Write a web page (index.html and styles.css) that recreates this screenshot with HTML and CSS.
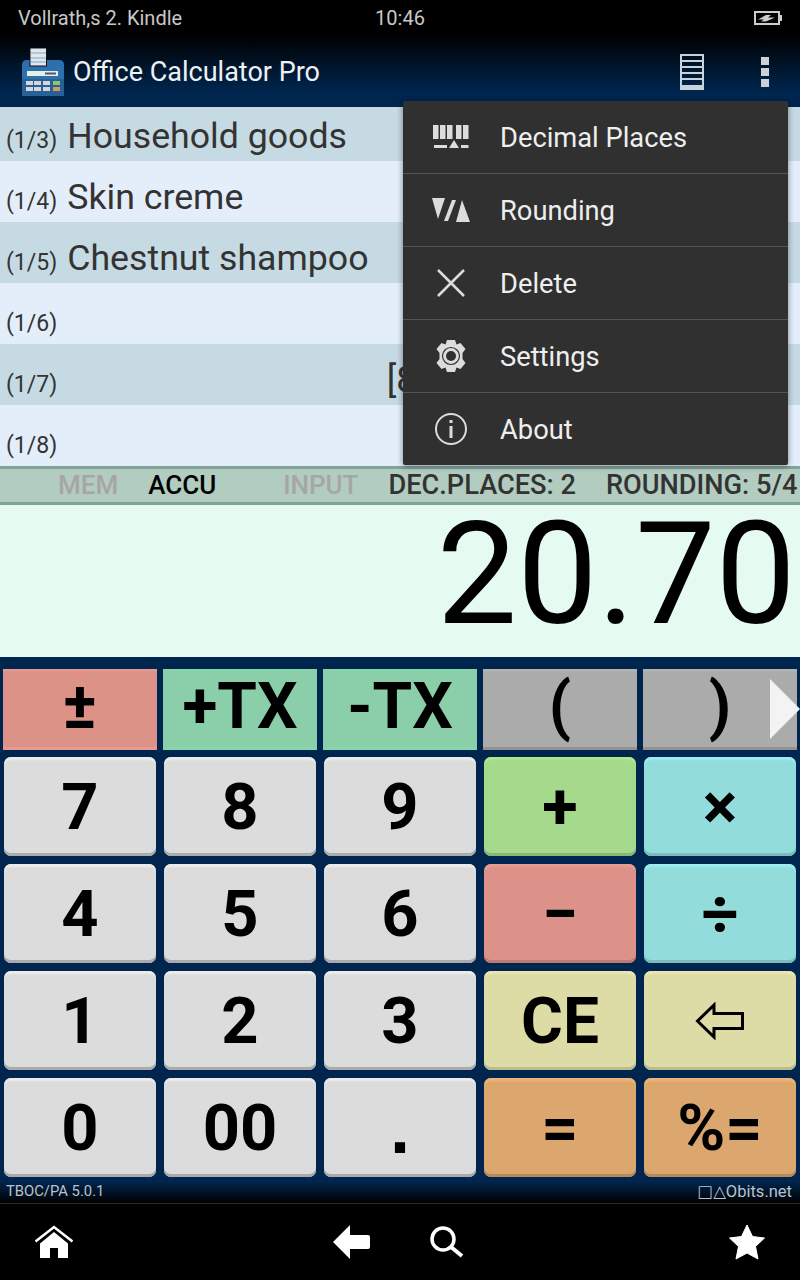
FILE: index.html
```html
<!DOCTYPE html>
<html lang="en">
  <head>
    <meta charset="utf-8" />
    <meta name="viewport" content="width=device-width, initial-scale=1" />
    <link rel="stylesheet" href="styles.css">
    <title>Office Calculator Pro</title>
  </head>
  <body>
    <main class="screen">
      <header class="top">
        <div class="status-bar">
          <span class="status-name">Vollrath,s 2. Kindle</span>
          <span class="status-clock">10:46</span>
          <svg class="status-battery" viewBox="0 0 28 14" width="28" height="14">
            <path d="M1 1h24v12H1z" fill="none" stroke="#ccc" stroke-width="2" />
            <rect x="26" y="4" width="2" height="6" fill="#ccc" />
            <path d="M4 8.500 12 4h5l-3 2.500h7L12 10.500H7l3-2z" fill="#ccc" />
          </svg>
        </div>
        <div class="action-bar">
          <svg class="app-logo" viewBox="0 0 42 48" width="42" height="48">
            <path d="M0 17q0-5 5-5h32q5 0 5 5v31H0z" fill="#2f6fae" />
            <rect x="0" y="31" width="42" height="17" fill="#28609a" />
            <rect x="8" y="0" width="16.500" height="18" fill="#dfe8ee" stroke="#10131a" />
            <path d="M9 5h15M9 10h15M9 14h15" stroke="#b4c6d6" stroke-width="2" />
            <rect x="5" y="23" width="31" height="5" fill="#dff2ea" />
            <rect x="23" y="24.500" width="11" height="2" fill="#556" />
            <g fill="#d6d6d6">
              <rect x="4" y="33" width="7" height="4" />
              <rect x="12" y="33" width="7" height="4" />
              <rect x="21" y="33" width="7" height="4" />
              <rect x="4" y="39" width="7" height="4" />
              <rect x="12" y="39" width="7" height="4" />
              <rect x="21" y="39" width="7" height="4" />
            </g>
            <rect x="31" y="33" width="7" height="4" fill="#8cc56c" />
            <rect x="31" y="39" width="7" height="4" fill="#d89a54" />
          </svg>
          <h1 class="app-title">Office Calculator Pro</h1>
          <svg class="tape-icon" viewBox="0 0 24 36" width="24" height="36">
            <path d="M1 1h22v34H1z" fill="none" stroke="#c8d2dc" stroke-width="2" />
            <path d="M1 7h22M1 13h22M1 19h22M1 25h22" stroke="#c8d2dc" stroke-width="2" />
            <rect x="0" y="31" width="24" height="5" fill="#c8d2dc" />
          </svg>
          <div class="overflow-dots"><i></i><i></i><i></i></div>
        </div>
      </header>

      <section class="tape">
        <ul class="tape-rows">
          <li class="tape-row"><span class="row-no">(1/3)</span><span class="row-name">Household goods</span></li>
          <li class="tape-row"><span class="row-no">(1/4)</span><span class="row-name">Skin creme</span></li>
          <li class="tape-row"><span class="row-no">(1/5)</span><span class="row-name">Chestnut shampoo</span></li>
          <li class="tape-row"><span class="row-no">(1/6)</span><span class="row-name">&nbsp;</span></li>
          <li class="tape-row"><span class="row-no">(1/7)</span><span class="row-name">&nbsp;</span><span class="row-value">[8.00]</span></li>
          <li class="tape-row"><span class="row-no">(1/8)</span><span class="row-name">&nbsp;</span></li>
        </ul>
      </section>

      <div class="indicators">
        <span class="ind-off">MEM</span>
        <span class="ind-on">ACCU</span>
        <span class="ind-off">INPUT</span>
        <span>DEC.PLACES: 2</span>
        <span>ROUNDING: 5/4</span>
      </div>

      <output class="display">20.70</output>

      <section class="keypad">
        <div class="func-keys">
          <button class="fkey fkey-red">±</button>
          <button class="fkey fkey-green">+TX</button>
          <button class="fkey fkey-green">-TX</button>
          <button class="fkey fkey-grey">(</button>
          <button class="fkey fkey-grey">)</button>
          <span class="more-arrow"></span>
        </div>
        <div class="keys">
          <button class="key">7</button>
          <button class="key">8</button>
          <button class="key">9</button>
          <button class="key key-green">+</button>
          <button class="key key-cyan">×</button>
          <button class="key">4</button>
          <button class="key">5</button>
          <button class="key">6</button>
          <button class="key key-red">−</button>
          <button class="key key-cyan">÷</button>
          <button class="key">1</button>
          <button class="key">2</button>
          <button class="key">3</button>
          <button class="key key-yellow key-ce">CE</button>
          <button class="key key-yellow" aria-label="Backspace">
            <svg class="back-arrow" viewBox="0 0 50 38" width="50" height="38">
              <path d="M2.500 19 19 3v8.500h28.500v15H19V35z" fill="none" stroke="#000" stroke-width="3" />
            </svg>
          </button>
          <button class="key">0</button>
          <button class="key">00</button>
          <button class="key key-dot">.</button>
          <button class="key key-orange">=</button>
          <button class="key key-orange">%=</button>
        </div>
        <footer class="credits">
          <span>TBOC/PA 5.0.1</span>
          <span class="credits-site">□△Obits.net</span>
        </footer>
      </section>

      <nav class="nav-bar">
        <svg viewBox="0 0 38 34" width="38" height="34">
          <path d="M.5 16.500 19 2l18.500 14.500" fill="none" stroke="#fff" stroke-width="2.500" />
          <path d="M19 7 33 18.500V33H23V23h-8v10H5V18.500z" fill="#fff" />
        </svg>
        <div class="nav-middle">
          <svg viewBox="0 0 37 34" width="37" height="34">
            <path d="M0 17 17 0v10h18q2 0 2 2v10q0 2-2 2H17v10z" fill="#fff" />
          </svg>
          <svg viewBox="0 0 34 32" width="34" height="32">
            <circle cx="13" cy="13" r="11" fill="none" stroke="#fff" stroke-width="3.500" />
            <path d="M21 21 32 30" stroke="#fff" stroke-width="4" />
          </svg>
        </div>
        <svg viewBox="0 0 36 36" width="36" height="36">
          <path d="M18 1 23.500 12.500 35.500 14 26.500 22.500 29 35 18 29 7 35 9.500 22.500 .5 14 12.500 12.500z" fill="#fff" stroke="#fff" stroke-linejoin="round" />
        </svg>
      </nav>

      <div class="menu">
        <div class="menu-item">
          <svg class="menu-icon" viewBox="0 0 40 40" width="40" height="40">
            <g fill="#dcdcdc">
              <rect x="2" y="8" width="5.500" height="14" />
              <rect x="9" y="8" width="5.500" height="14" />
              <rect x="16" y="8" width="5.500" height="14" />
              <rect x="25" y="8" width="5.500" height="14" />
              <rect x="32" y="8" width="5.500" height="14" />
              <rect x="3" y="28" width="13" height="3" />
              <path d="M18 31 23 23 28 31z" />
              <rect x="30" y="28" width="7.500" height="3" />
            </g>
          </svg>
          <span class="menu-label">Decimal Places</span>
        </div>
        <div class="menu-item">
          <svg class="menu-icon" viewBox="0 0 40 40" width="40" height="40">
            <g fill="#dcdcdc">
              <path d="M1 8H14L7 29z" />
              <path d="M21 10h4L17 31h-4z" />
              <path d="M31 10 39 32H25z" />
            </g>
          </svg>
          <span class="menu-label">Rounding</span>
        </div>
        <div class="menu-item">
          <svg class="menu-icon" viewBox="0 0 40 40" width="40" height="40">
            <path d="M7 7 33 33M33 7 7 33" stroke="#dcdcdc" stroke-width="2.500" />
          </svg>
          <span class="menu-label">Delete</span>
        </div>
        <div class="menu-item">
          <svg class="menu-icon" viewBox="0 0 40 40" width="40" height="40">
            <path d="M16 4h8l1.500 4.500 4-1.500 5 6-3 4v6l3 4-5 6-4-1.500L24 36h-8l-1.500-4.500-4 1.500-5-6 3-4v-6l-3-4 5-6 4 1.500z" fill="#dcdcdc" />
            <circle cx="20" cy="20" r="8.500" fill="none" stroke="#303030" stroke-width="1.200" />
            <circle cx="20" cy="20" r="5" fill="#303030" />
          </svg>
          <span class="menu-label">Settings</span>
        </div>
        <div class="menu-item">
          <svg class="menu-icon" viewBox="0 0 40 40" width="40" height="40">
            <circle cx="20" cy="20" r="15" fill="none" stroke="#dcdcdc" stroke-width="2" />
            <rect x="18.500" y="11" width="3" height="3" fill="#dcdcdc" />
            <rect x="18.500" y="17" width="3" height="12" fill="#dcdcdc" />
          </svg>
          <span class="menu-label">About</span>
        </div>
      </div>
    </main>
  </body>
</html>
```

FILE: styles.css
```css
:root {
  --navy: #00264f;
}

* {
  box-sizing: border-box;
}

body {
  margin: 0;
  background: #000;
  font-family: Roboto, sans-serif;
}

button {
  font-family: inherit;
}

.screen {
  position: relative;
  display: flex;
  flex-direction: column;
  width: 800px;
  height: 1280px;
  overflow: hidden;
}

/* Status bar and action bar share the one gradient */
.top {
  position: relative;
  z-index: 1;
  height: 107px;
  background: linear-gradient(#000 33%, var(--navy) 86%);
}

.status-bar {
  display: grid;
  grid-template-columns: 1fr auto 1fr;
  align-items: center;
  height: 36px;
  padding: 0 18px;
  color: #c8c8c8;
  font-size: 20px;
}

.status-battery {
  justify-self: end;
}

.action-bar {
  display: flex;
  align-items: center;
  height: 71px;
  padding-left: 22px;
}

.app-logo {
  margin-right: 9px;
}

.app-title {
  flex: 1;
  margin: 0;
  color: #eef1f4;
  font-size: 27px;
  font-weight: 400;
}

.overflow-dots {
  display: flex;
  flex-direction: column;
  gap: 3px;
  margin: 0 31px 0 57px;

  & i {
    width: 8px;
    height: 8px;
    background: #ccd0d8;
  }
}

/* The first row is scrolled part way under the action bar */
.tape {
  height: 359px;
  overflow: hidden;
}

.tape-rows {
  list-style: none;
  margin: -7px 0 0;
  padding: 0;
}

.tape-row {
  display: flex;
  align-items: baseline;
  height: 61px;
  padding: 15px 0 0 6px;
  background: #c6dae3;
  color: #333;

  &:nth-child(even) {
    background: #e3eefa;
  }
}

.row-no {
  margin-right: 10px;
  font-size: 23px;
}

.row-name {
  font-size: 35.700px;
}

.row-value {
  margin-left: auto;
  padding-right: 324px;
  font-size: 36px;
}

.indicators {
  display: flex;
  gap: 30px;
  align-items: center;
  height: 39px;
  padding: 0 0 2px 58px;
  border-top: 3px solid #82a398;
  border-bottom: 3px solid #82a398;
  background: #b2ccc0;
  color: #333;
  font-size: 27.200px;
  font-weight: 500;
  white-space: nowrap;
}

.ind-off {
  color: #a6a6a6;
  font-size: 26px;
}

.ind-on {
  margin-right: 37px;
  color: #000;
  font-size: 26px;
}

.display {
  display: block;
  height: 152px;
  padding-right: 4px;
  background: #e5faf0;
  color: #000;
  font-size: 143px;
  line-height: 139px;
  text-align: right;
}

.keypad {
  flex: 1;
  padding-top: 12px;
  background: linear-gradient(var(--navy) 96%, #000 100%);
}

.func-keys {
  position: relative;
  display: grid;
  grid-template-columns: repeat(5, 154px);
  gap: 6px;
  height: 81px;
  padding-left: 3px;
}

.fkey {
  padding: 0 0 6px;
  border: 0;
  background: var(--key);
  box-shadow: inset 0 3px 2px -1px var(--key-top), inset 0 -3px 0 var(--key-bottom);
  color: #000;
  font-size: 64px;
  font-weight: 700;
  line-height: 1;
}

.fkey-red {
  --key: #dc9287;
  --key-top: #e69b90;
  --key-bottom: #e69b90;
}

.fkey-green {
  --key: #8acfaa;
  --key-top: #85d6aa;
  --key-bottom: #85d6aa;
}

.fkey-grey {
  --key: #ababab;
  --key-top: #b5b5b5;
  --key-bottom: #939393;
}

.more-arrow {
  position: absolute;
  top: 10px;
  right: 0;
  border-top: 30px solid transparent;
  border-bottom: 30px solid transparent;
  border-left: 30px solid #f3f3f3;
}

.keys {
  display: grid;
  grid-template-columns: repeat(5, 152px);
  grid-auto-rows: 99px;
  gap: 8px;
  margin-top: 7px;
  padding-left: 4px;
}

.key {
  --key: #dcdcdc;
  --key-top: #ececec;
  --key-bottom: #ababab;
  padding: 2px 0 0;
  border: 0;
  border-radius: 7px;
  background: var(--key);
  box-shadow: inset 0 4px 2px -1px var(--key-top), inset 0 -3px 0 var(--key-bottom);
  color: #000;
  font-size: 65px;
  font-weight: 700;
  line-height: 1;
}

.key-green {
  --key: #a5d98b;
  --key-top: #aee88f;
  --key-bottom: #8bb575;
}

.key-cyan {
  --key: #92dcdc;
  --key-top: #9bedf0;
  --key-bottom: #7ebcbc;
}

.key-red {
  --key: #dd9289;
  --key-top: #ea9c91;
  --key-bottom: #bb7c74;
}

.key-yellow {
  --key: #dddba6;
  --key-top: #e8e6ae;
  --key-bottom: #bdbb8c;
}

.key-orange {
  --key: #dca76e;
  --key-top: #efb37a;
  --key-bottom: #b88a5a;
}

.key-ce {
  font-size: 64px;
}

.key-dot {
  padding: 0;
  font-family: "Liberation Sans", sans-serif;
  font-size: 72px;
}

.back-arrow {
  display: block;
  margin: -2px auto 0;
}

.credits {
  display: flex;
  justify-content: space-between;
  align-items: center;
  height: 26px;
  padding: 2px 8px 0 6px;
  color: #b9c2cc;
  font-size: 14.800px;
}

.credits-site {
  font-family: Roboto, "DejaVu Sans", sans-serif;
  font-size: 16.500px;
}

.nav-bar {
  display: flex;
  justify-content: space-between;
  align-items: center;
  height: 77px;
  padding: 0 35px 1px;
  border-top: 1px solid #2c2c2c;
  background: #000;
}

.nav-middle {
  display: flex;
  gap: 60px;
  align-items: center;
  margin-right: 5px;
}

/* Overflow menu sits on top of the tape */
.menu {
  position: absolute;
  top: 101px;
  left: 403px;
  z-index: 2;
  width: 385px;
  border-radius: 2px;
  background: #303030;
  box-shadow: 0 1px 6px rgb(0 0 0 / 0.45);
  color: #eee;
  font-size: 27.300px;
}

.menu-item {
  display: flex;
  gap: 29px;
  align-items: center;
  height: 73px;
  padding-left: 28px;
  border-top: 1px solid #555;

  &:first-child {
    height: 72px;
    border-top: 0;
  }
}

.menu-label {
  padding-top: 2px;
}
```
